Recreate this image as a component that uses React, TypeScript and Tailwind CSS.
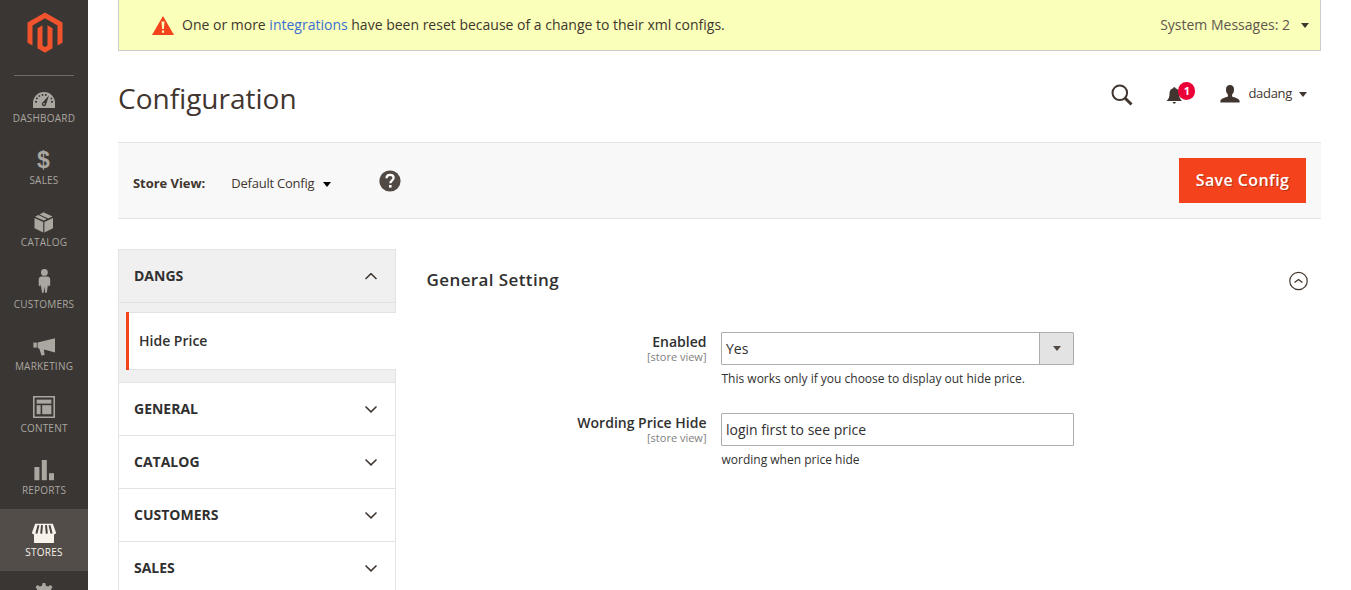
import type { ReactNode } from "react";

type MenuItem = { id: string; label?: string; icon: ReactNode; active?: boolean };

const menu: MenuItem[] = [
  {
    id: "dashboard",
    label: "Dashboard",
    icon: (
      <>
        <path d="M1 27V22a11 11 0 0 1 22 0v5z" fill="currentColor" />
        <g fill="#3a3633">
          <rect x="3" y="20" width="2" height="1.600" />
          <rect x="4" y="16.600" width="1.800" height="1.600" />
          <rect x="6.600" y="14.200" width="1.600" height="1.600" />
          <rect x="9.800" y="13" width="1.600" height="1.800" />
          <rect x="13" y="13" width="1.600" height="1.800" />
          <rect x="19" y="20" width="2" height="1.600" />
          <rect x="18.600" y="16.800" width="1.600" height="1.600" />
          <path d="M17 14.500l-2.800 8.400a2.200 2.200 0 1 1-3.200-1.800z" />
        </g>
        <circle cx="12" cy="22.800" r="0.900" fill="currentColor" />
      </>
    ),
  },
  {
    id: "sales",
    label: "Sales",
    icon: (
      <text x="11.500" y="24.500" textAnchor="middle" fill="currentColor" className="font-['Liberation_Sans'] text-[23px] font-bold">
        $
      </text>
    ),
  },
  {
    id: "catalog",
    label: "Catalog",
    icon: (
      <g fill="currentColor">
        <path d="M2.500 13l8.700 4v10.400l-8.700-4.200z" />
        <path d="M21 13l-8.600 4v10.400l8.600-4.200z" />
        <path d="M3 11.800l3.400-1.700 8.400 4-3 1.500z" />
        <path d="M7.500 9.500l4-2.300 9 4.400-4.200 1.900z" />
      </g>
    ),
  },
  {
    id: "customers",
    label: "Customers",
    icon: (
      <g fill="currentColor">
        <circle cx="12.400" cy="5.400" r="3.400" />
        <path d="M9.500 9.400h6c1.800 0 2.700 1.400 2.700 3v6.200l-1.600 1-.6-2-1.200 8.200h-1.600l-.8-6-.8 6H10l-1.200-8.200-.6 2-1.500-1v-6.200c0-1.600 1-3 2.800-3z" />
      </g>
    ),
  },
  {
    id: "marketing",
    label: "Marketing",
    icon: (
      <g fill="currentColor">
        <path d="M1.400 13.600h3.400v5H1.400z" />
        <path d="M5.600 13.400L23 9.300v14.300l-11-3 .2 3 .6 2.200-3.200 1-2.400-7.200-1.600-.5z" />
      </g>
    ),
  },
  {
    id: "content",
    label: "Content",
    icon: (
      <g fill="currentColor">
        <path fillRule="evenodd" d="M1 5h22v22H1zM2.600 6.600v18.800h18.800V6.600z" />
        <rect x="4.600" y="8.600" width="14.800" height="4" />
        <rect x="4.600" y="14.200" width="4" height="9" />
        <rect x="10.200" y="14.200" width="9.200" height="9" />
      </g>
    ),
  },
  {
    id: "reports",
    label: "Reports",
    icon: (
      <g fill="currentColor">
        <rect x="2.400" y="14" width="5" height="13.200" />
        <rect x="9.800" y="7" width="5" height="20.200" />
        <rect x="17" y="20.200" width="5" height="7" />
      </g>
    ),
  },
  {
    id: "stores",
    label: "Stores",
    active: true,
    icon: (
      <>
        <g fill="currentColor">
          <path d="M3.200 8.800h17.600L24 17.600c0 2.400-3.600 2.600-4.600.8-1 1.600-3.800 1.600-4.900 0-1 1.600-4 1.600-5 0-1 1.600-3.900 1.600-4.900 0C3.600 20.200 0 20 0 17.600z" />
          <path d="M2 18.600h20V28H2z" />
        </g>
        <path
          d="M6.500 10.200L4.400 18.600M10 10.200L9.200 18.600M14 10.200l.8 8.400M17.500 10.200l2.100 8.400"
          stroke="#4a4541"
          strokeWidth="2"
        />
      </>
    ),
  },
  {
    id: "system",
    icon: (
      <path
        fill="currentColor"
        d="M10.600 6h2.600l.7 2.700 2.200.9L18.500 8l2 2-1.500 2.600.9 2.200 2.700.7v2.700h-21v-2.700l2.700-.7.9-2.200L3.500 10l2-2 2.400 1.600 2.100-.9z"
      />
    ),
  },
];

function Caret({ className }: { className?: string }) {
  return (
    <svg viewBox="0 0 8 5" width="8" height="5" className={className}>
      <path d="M0 0h8L4 5z" fill="currentColor" />
    </svg>
  );
}

function Chevron({ up }: { up?: boolean }) {
  return (
    <svg viewBox="0 0 12 7" width="12" height="7" fill="none" stroke="#41362f" strokeWidth="1.500">
      <path d={up ? "M.5 6L6 .6 11.500 6" : "M.5.5L6 5.900 11.500.5"} />
    </svg>
  );
}

function Sidebar() {
  return (
    <nav className="flex h-full w-[88px] shrink-0 flex-col overflow-hidden bg-[#3a3633]">
      <div className="mx-3.5 flex h-[76px] shrink-0 justify-center border-b border-[#736963] pt-3">
        <svg viewBox="0 0 36 41" width="36" height="41" className="ml-px" fill="#f1532c">
          <path d="M18 .5L.5 10.500v20.200l5 2.900V13.500L18 6.300l12.500 7.200v20.100l5-2.900V10.500z" />
          <path d="M15.500 13.300l-5 2.900v20.100L18 40.700l7.500-4.400V16.200l-5-2.900v20.200L18 35l-2.500-1.500z" />
        </svg>
      </div>
      <ul className="-mt-px">
        {menu.map((item) => (
          <li
            key={item.id}
            className={
              item.active
                ? "flex h-[62px] flex-col items-center bg-[#524d49] pt-1.5 text-[#f7f3eb]"
                : "flex h-[62px] flex-col items-center pt-1.5 text-[#aaa6a0]"
            }
          >
            <svg viewBox="0 0 24 30" width="24" height="30" className="shrink-0">
              {item.icon}
            </svg>
            {item.label && <span className="text-[10px] leading-[14px] uppercase tracking-[0.22px]">{item.label}</span>}
          </li>
        ))}
      </ul>
    </nav>
  );
}

function SystemMessages() {
  return (
    <div className="flex h-[51px] items-center border border-t-0 border-[#cccccc] bg-[#faffb9] pr-[11px] pl-[33px] text-sm text-[#41362f]">
      <svg viewBox="0 0 22 19" width="22" height="19" className="mt-px">
        <path d="M11 0l11 19H0z" fill="#f4431c" />
        <path d="M9.500 5.500h3l-.6 7.500h-1.800zM9.900 14.500h2.200v2.200H9.900z" fill="#faffb9" />
      </svg>
      <p className="ml-2 flex-1">
        One or more <a className="text-[#3b6fd6]">integrations</a> have been reset because of a change to their xml configs.
      </p>
      <span className="text-[#5f564f]">System Messages: 2</span>
      <Caret className="ml-[11px] text-[#41362f]" />
    </div>
  );
}

function PageHeader() {
  return (
    <header className="flex h-[91px] items-center text-[#41362f]">
      <h1 className="mt-[3px] flex-1 text-[28px] leading-[38px]">Configuration</h1>
      <div className="-mt-[5px] flex items-center pr-3.5">
        <svg viewBox="0 0 22 22" width="22" height="22" fill="none" stroke="currentColor" className="mt-0.5">
          <circle cx="8.800" cy="8.800" r="7.300" strokeWidth="2" />
          <path d="M14.200 14.200l6.300 6.300" strokeWidth="3" />
        </svg>
        <div className="relative ml-[33px] h-[18px] w-[17px]">
          <svg viewBox="0 0 17 18" width="17" height="18" fill="currentColor" className="mt-px">
            <path d="M8.300 1.200c.8 0 1.200.5 1.200 1.100 2.400.6 3.600 2.600 3.600 5.200 0 3 .5 5.400 2.900 7.500H.6c2.400-2.100 2.900-4.500 2.900-7.500C3.500 4.900 4.700 2.900 7.100 2.300c0-.6.4-1.100 1.200-1.100z" />
            <path d="M6.700 16h3.200c-.2 2.200-3 2.200-3.200 0z" />
          </svg>
          <span className="absolute -top-[3px] left-3 flex h-[18px] w-[17px] items-center justify-center rounded-full bg-[#eb0037] text-[11px] font-bold text-white">
            1
          </span>
        </div>
        <svg viewBox="0 0 20 18" width="20" height="18" fill="currentColor" className="ml-[37px]">
          <path d="M10 0c2.600 0 4 1.600 4 4.300 0 2.400-.6 4.200-1.900 5.300v1.900c2.600 1.100 7.500 2.200 7.500 4.500v1.600H.4V16c0-2.300 4.900-3.400 7.500-4.500V9.600C6.600 8.500 6 6.700 6 4.300 6 1.600 7.400 0 10 0z" />
        </svg>
        <span className="ml-2 text-[13px] tracking-[-0.3px]">dadang</span>
        <Caret className="mt-px ml-[7px]" />
      </div>
    </header>
  );
}

function ActionBar() {
  return (
    <div className="flex h-[77px] items-center border-y border-[#e3e3e3] bg-[#f8f8f8] px-[15px] text-[13px] text-[#41362f]">
      <span className="mt-[7px] font-bold tracking-[-0.05px]">Store View:</span>
      <span className="mt-[7px] ml-[26px] tracking-[-0.22px]">Default Config</span>
      <Caret className="mt-[7px] ml-[9px] text-black" />
      <svg viewBox="0 0 22 22" width="22" height="22" className="mt-px ml-12">
        <circle cx="11" cy="11" r="10.600" fill="#514943" />
        <path d="M7.500 8.200c.1-2.200 1.600-3.300 3.600-3.300 2 0 3.500 1.100 3.500 2.900 0 2.700-3.300 2.800-3.300 5.400" fill="none" stroke="#fff" strokeWidth="2.300" />
        <rect x="10" y="15" width="2.600" height="2.600" fill="#fff" />
      </svg>
      <button className="ml-auto h-[45px] w-[127px] bg-[#f4431c] pb-0.5 text-base font-semibold tracking-[0.4px] text-white [text-shadow:1px_1px_0_rgba(0,0,0,0.25)]">
        Save Config
      </button>
    </div>
  );
}

function ConfigTabs() {
  return (
    <aside className="w-[278px] shrink-0 text-sm text-[#303030]">
      <div className="flex h-[54px] items-center justify-between border border-[#e3e3e3] bg-[#f0f0f0] pr-[18px] pl-[15px] font-bold">
        DANGS
        <Chevron up />
      </div>
      <div className="border-l border-[#e3e3e3] bg-[#f0f0f0]">
        <div className="h-[9px] border-r border-[#e3e3e3]" />
        <div className="ml-[7px] flex h-[58px] border-l-[3px] border-[#f4431c]">
          <div className="flex flex-1 items-center border-y border-[#e3e3e3] bg-white pl-2.5 font-semibold">Hide Price</div>
        </div>
        <div className="h-3 border-r border-[#e3e3e3]" />
      </div>
      {["GENERAL", "CATALOG", "CUSTOMERS", "SALES"].map((name) => (
        <div key={name} className="flex h-[53px] items-center justify-between border border-b-0 border-[#e3e3e3] pr-[18px] pl-[15px] font-bold">
          {name}
          <Chevron />
        </div>
      ))}
    </aside>
  );
}

function Field({ label, note, children }: { label: string; note: string; children: ReactNode }) {
  return (
    <div className="flex h-[81px] text-[#303030]">
      <div className="w-[280.5px] text-right">
        <div className="text-sm leading-[19px] font-semibold">{label}</div>
        <div className="text-[11px] leading-3 text-[#808080]">[store view]</div>
      </div>
      <div className="ml-[14.5px] w-[353px]">
        {children}
        <p className="mt-1.5 pl-[0.5px] text-xs leading-4">{note}</p>
      </div>
    </div>
  );
}

function SettingsPanel() {
  return (
    <section className="ml-[30px] flex-1">
      <div className="flex h-[62px] items-center justify-between pr-[13px] pl-[0.5px]">
        <h2 className="text-[17px] leading-6 font-semibold tracking-[0.4px] text-[#303030]">General Setting</h2>
        <svg viewBox="0 0 20 20" width="20" height="20" fill="none" stroke="#41362f" className="mt-0.5">
          <circle cx="10.500" cy="10" r="8.700" strokeWidth="1.200" />
          <path d="M6.500 11.500l4-3 4 3" strokeWidth="1.400" />
        </svg>
      </div>
      <div className="pt-[21px]">
        <Field label="Enabled" note="This works only if you choose to display out hide price.">
          <div className="flex h-[33px] rounded-[1px] border border-[#adadad] text-sm">
            <span className="flex flex-1 items-center pl-1">Yes</span>
            <span className="flex w-[34px] items-center justify-center border-l border-[#adadad] bg-[#e3e3e3] text-[#514943]">
              <Caret />
            </span>
          </div>
        </Field>
        <Field label="Wording Price Hide" note="wording when price hide">
          <div className="flex h-[33px] items-center rounded-[1px] border border-[#adadad] pl-1 text-sm">login first to see price</div>
        </Field>
      </div>
    </section>
  );
}

export default function App() {
  return (
    <div className="flex h-[590px] w-[1351px] overflow-hidden bg-white font-['Open_Sans','Noto_Sans',sans-serif]">
      <Sidebar />
      <main className="ml-[30px] w-[1203px]">
        <SystemMessages />
        <PageHeader />
        <ActionBar />
        <div className="flex pt-[30px]">
          <ConfigTabs />
          <SettingsPanel />
        </div>
      </main>
    </div>
  );
}
